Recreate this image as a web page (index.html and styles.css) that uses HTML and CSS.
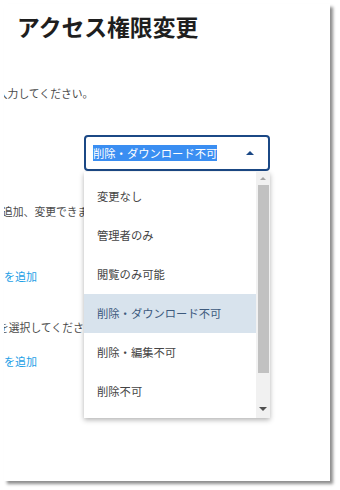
FILE: index.html
```html
<!DOCTYPE html>
<html lang="ja">
<head>
    <meta charset="UTF-8">
    <meta name="viewport" content="width=device-width, initial-scale=1.0">
    <title>アクセス権限変更</title>
    <link rel="stylesheet" href="styles.css">
</head>
<body>

<div class="dialog">
    <h1 class="dialog-title">アクセス権限変更</h1>

    <p class="note note-first">を入力してください。</p>

    <!-- permission select, opened -->
    <div class="select-box">
        <span class="select-value">削除・ダウンロード不可</span>
        <span class="select-arrow"></span>

        <div class="select-list">
            <ul class="options">
                <li>変更なし</li>
                <li>管理者のみ</li>
                <li>閲覧のみ可能</li>
                <li class="active">削除・ダウンロード不可</li>
                <li>削除・編集不可</li>
                <li>削除不可</li>
            </ul>
            <div class="scrollbar">
                <span class="scroll-up"></span>
                <span class="scroll-thumb"></span>
                <span class="scroll-down"></span>
            </div>
        </div>
    </div>

    <p class="note note-second">追加、変更できます。</p>
    <a class="add-link link-first" href="#">を追加</a>
    <p class="note note-third">を選択してください。</p>
    <a class="add-link link-second" href="#">を追加</a>
</div>

</body>
</html>
```

FILE: styles.css
```css
html, body {
    height: 100%;
}

body {
    margin: 0;
    padding: 4px 0 0 4px;
    box-sizing: border-box;
    background-color: #fff;
    font-family: "Noto Sans CJK JP", "Noto Sans", sans-serif;
}

.dialog {
    width: 326px;
    height: 477px;
    padding-top: 8px;
    box-sizing: border-box;
    background-color: #fff;
    box-shadow: 3px 3px 3px rgba(0, 0, 0, 0.45);
    overflow: hidden;
    display: flex;
    flex-direction: column;
    align-items: flex-start;
}

.dialog-title {
    margin: 0 0 0 13px;
    font-size: 22.8px;
    line-height: 30px;
    font-weight: bold;
    color: #1e1e1e;
}

.note {
    margin: 0;
    font-size: 10.8px;
    line-height: 18px;
    color: #4a4a4a;
    white-space: nowrap;
}

.note-first {
    margin: 42px 0 0 -18px;
}

.note-second {
    margin: 31px 0 0 -2px;
}

.note-third {
    margin: 33px 0 0 -6px;
}

.add-link {
    font-size: 11px;
    line-height: 18px;
    color: #1ea0e6;
    text-decoration: none;
}

.link-first {
    margin: 47px 0 0 0;
}

.link-second {
    margin: 16px 0 0 0;
}

/* select */

.select-box {
    position: relative;
    width: 186px;
    height: 36px;
    margin: 33px 0 0 80px;
    box-sizing: border-box;
    border: 2px solid #1b4885;
    border-radius: 4px;
    display: flex;
    align-items: center;
    justify-content: space-between;
    padding: 0 14px 0 7px;
}

.select-value {
    font-size: 11.3px;
    line-height: 16px;
    color: #fff;
    background-color: #3a8ef2;
}

.select-arrow {
    width: 0;
    height: 0;
    border-left: 4px solid transparent;
    border-right: 4px solid transparent;
    border-bottom: 4px solid #1b4885;
}

.select-list {
    position: absolute;
    top: 35px;
    left: -2px;
    width: 186px;
    height: 246px;
    background-color: #fff;
    box-shadow: 0 2px 5px rgba(0, 0, 0, 0.3);
    display: flex;
    z-index: 2;
}

.options {
    flex: 1;
    list-style: none;
    margin: 0;
    padding: 5px 0 0 0;
}

.options li {
    height: 39px;
    line-height: 39px;
    padding-left: 13px;
    font-size: 11.3px;
    color: #444;
}

.options li.active {
    background-color: #d8e3ed;
    color: #3d5a7d;
}

.scrollbar {
    width: 14px;
    background-color: #f1f1f1;
    display: flex;
    flex-direction: column;
    align-items: center;
}

.scroll-up {
    margin-top: 5px;
    border-left: 3px solid transparent;
    border-right: 3px solid transparent;
    border-bottom: 3px solid #a3a3a3;
}

.scroll-thumb {
    width: 11px;
    height: 188px;
    margin-top: 5px;
    background-color: #c1c1c1;
}

.scroll-down {
    margin-top: auto;
    margin-bottom: 7px;
    border-left: 4px solid transparent;
    border-right: 4px solid transparent;
    border-top: 4px solid #505050;
}
```
